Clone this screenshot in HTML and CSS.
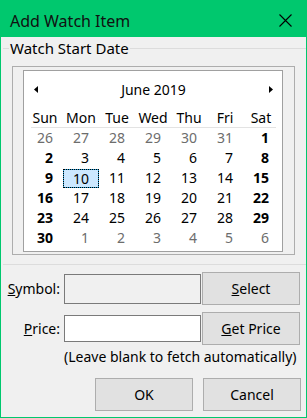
FILE: index.html
```html
<!DOCTYPE html>
<html>
<head>
<meta charset="utf-8">
<link rel="stylesheet" href="styles.css">
</head>
<body>
<div class="window">
  <div class="titlebar">
    <span class="title">Add Watch Item</span>
    <svg class="close" width="13" height="13" viewBox="0 0 13 13"><path d="M0.5 0.5L12.5 12.5M12.5 0.5L0.5 12.5" stroke="#000" stroke-width="1.1" fill="none"/></svg>
  </div>
  <div class="group">
    <div class="legend">Watch Start Date</div>
    <div class="cal-outer">
      <div class="cal">
        <div class="cal-head">
          <svg class="arrow" width="4" height="7" viewBox="0 0 4 7"><polygon points="4,0 4,7 0,3.5" fill="#000"/></svg>
          <span class="month">June 2019</span>
          <svg class="arrow" width="4" height="7" viewBox="0 0 4 7"><polygon points="0,0 0,7 4,3.5" fill="#000"/></svg>
        </div>
        <div class="names">
          <span>Sun</span><span>Mon</span><span>Tue</span><span>Wed</span><span>Thu</span><span>Fri</span><span>Sat</span>
        </div>
        <div class="sep"></div>
        <div class="dates">
          <span class="o">26</span><span class="o">27</span><span class="o">28</span><span class="o">29</span><span class="o">30</span><span class="o">31</span><span class="b">1</span>
          <span class="b">2</span><span>3</span><span>4</span><span>5</span><span>6</span><span>7</span><span class="b">8</span>
          <span class="b">9</span><span class="sel">10</span><span>11</span><span>12</span><span>13</span><span>14</span><span class="b">15</span>
          <span class="b">16</span><span>17</span><span>18</span><span>19</span><span>20</span><span>21</span><span class="b">22</span>
          <span class="b">23</span><span>24</span><span>25</span><span>26</span><span>27</span><span>28</span><span class="b">29</span>
          <span class="b">30</span><span class="o">1</span><span class="o">2</span><span class="o">3</span><span class="o">4</span><span class="o">5</span><span class="o">6</span>
        </div>
      </div>
    </div>
  </div>
  <div class="row">
    <label class="label"><u>S</u>ymbol:</label>
    <div class="input input-sym"></div>
    <button class="btn"><u>S</u>elect</button>
  </div>
  <div class="row">
    <label class="label"><u>P</u>rice:</label>
    <div class="input input-price"></div>
    <button class="btn"><u>G</u>et Price</button>
  </div>
  <div class="hint">(Leave blank to fetch automatically)</div>
  <div class="actions">
    <button class="btn act">OK</button>
    <button class="btn act">Cancel</button>
  </div>
</div>
</body>
</html>
```
FILE: styles.css
```css
body {
  margin: 0;
  font-family: "Noto Sans", "Open Sans", sans-serif;
  font-size: 14px;
  color: #000;
}
.window {
  width: 307px;
  height: 418px;
  box-sizing: border-box;
  border: 1px solid #00c86e;
  background: #f0f0f0;
}
.titlebar {
  height: 36px;
  box-sizing: border-box;
  background: #00c86e;
  display: flex;
  align-items: center;
  justify-content: space-between;
  padding: 3px 14px 0 9px;
}
.title {
  font-size: 16px;
  color: #111;
}
.close { display: block; }
.group {
  position: relative;
  margin: 11px 0 0 2px;
  height: 215px;
  border-top: 1px solid #dcdcdc;
  border-bottom: 1px solid #dcdcdc;
}
.legend {
  position: absolute;
  left: 6px;
  top: -11px;
  padding: 0 1px;
  line-height: 20px;
  font-size: 15px;
  background: #f0f0f0;
}
.cal-outer {
  margin: 17px 0 0 9px;
  width: 283px;
  height: 189px;
  box-sizing: border-box;
  border: 1px solid #adadad;
  padding: 3px 0 0 10px;
}
.cal {
  width: 260px;
  height: 182px;
  box-sizing: border-box;
  border: 1px solid #a0a0a0;
  background: #fff;
  padding: 0 3px;
}
.cal-head {
  height: 37px;
  display: flex;
  align-items: center;
  justify-content: space-between;
  padding: 0 6px 0 7px;
}
.arrow { display: block; }
.month { font-size: 14px; }
.names, .dates {
  display: grid;
  grid-template-columns: repeat(7, 36px);
}
.names {
  height: 19px;
  line-height: 19px;
  text-align: center;
}
.sep {
  height: 1px;
  background: #e3e3e3;
  margin: 0 3px 0 4px;
}
.dates {
  grid-auto-rows: 20px;
  line-height: 20px;
}
.dates span {
  text-align: right;
  padding-right: 10px;
}
.dates .o { color: #6d6d6d; }
.dates .b { font-weight: bold; }
.dates .sel {
  box-sizing: border-box;
  height: 19px;
  margin-top: 1px;
  line-height: 17px;
  padding-right: 9px;
  background: #cce8ff;
  border: 1px solid #26a0da;
  outline: 1px dotted #000;
  outline-offset: -1px;
}
.row {
  display: flex;
  align-items: center;
  height: 33px;
  margin-top: 7px;
}
.label {
  width: 59px;
  text-align: right;
}
.input {
  margin-left: 4px;
  width: 137px;
  box-sizing: border-box;
  border: 1px solid #7a7a7a;
}
.input-sym {
  height: 30px;
  background: #f0f0f0;
}
.input-price {
  height: 27px;
  background: #fff;
}
.btn {
  margin: 0 0 0 1px;
  width: 98px;
  height: 33px;
  box-sizing: border-box;
  border: 1px solid #adadad;
  background: #e1e1e1;
  font-family: inherit;
  font-size: 14px;
  color: #000;
  padding: 0;
}
.hint {
  margin: 2px 0 0 63px;
  line-height: 20px;
  white-space: nowrap;
}
.actions {
  display: flex;
  gap: 10px;
  margin: 11px 0 0 94px;
}
.btn.act { margin: 0; }
```
